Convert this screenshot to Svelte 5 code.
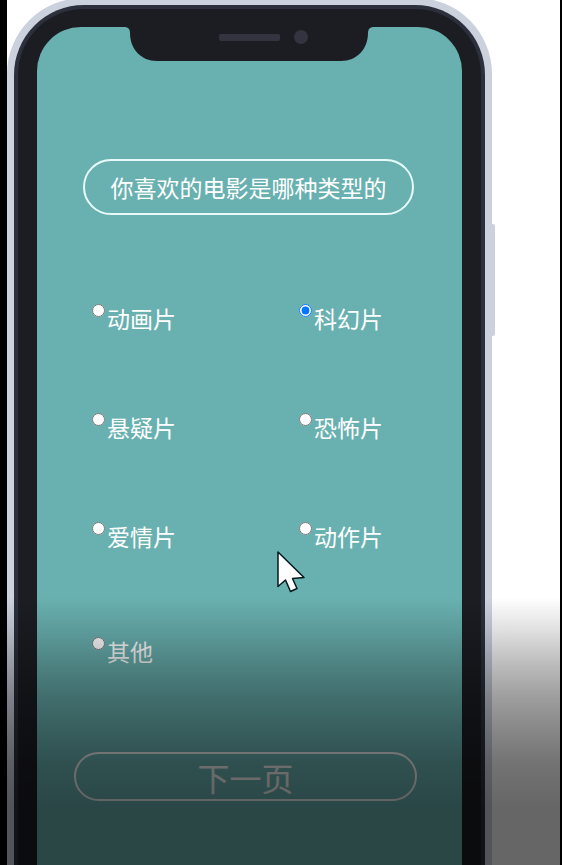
<script>
  const genres = ['动画片', '科幻片', '悬疑片', '恐怖片', '爱情片', '动作片', '其他'];
  let selected = $state('科幻片');
</script>

<div class="page">
  <main class="phone">
    <div class="rim">
      <div class="bezel">
        <form class="screen" onsubmit={(e) => e.preventDefault()}>
          <svg class="notch" width="250" height="35" viewBox="0 0 250 35" aria-hidden="true">
            <path d="M0 0H250V1C246 1 244 3 244 7C244 23 233 35 217 35H33C17 35 6 23 6 7C6 3 4 1 0 1Z" fill="#1c1d23" />
            <rect x="95" y="8" width="61" height="7" rx="2" fill="#33343f" />
            <circle cx="177" cy="11" r="7" fill="#33343f" />
          </svg>

          <h1 class="title" id="question">你喜欢的电影是哪种类型的</h1>

          <div class="options" role="radiogroup" aria-labelledby="question">
            {#each genres as genre}
              <label class="option" class:last={genre === '其他'}>
                <input type="radio" name="genre" value={genre} bind:group={selected} />
                <span>{genre}</span>
              </label>
            {/each}
          </div>

          <button class="next" type="submit">下一页</button>
        </form>
      </div>
    </div>
  </main>

  <div class="shade"></div>

  <svg class="cursor" width="30" height="44" viewBox="0 0 30 44" aria-hidden="true">
    <path d="M2 2V36.5L9.5 30L14.5 41.5L21 38.5L16.5 28.5L28 27.5Z" fill="#fff" stroke="#06181c" stroke-width="1.5" stroke-linejoin="round" />
  </svg>
</div>

<style>
  :global(body) {
    margin: 0;
    background: #fff;
  }

  .page {
    position: relative;
    display: flex;
    box-sizing: border-box;
    min-height: 100vh;
    overflow: hidden;
    border: solid #000;
    border-width: 0 2px 0 7px;
    background: #fff;
    font-family: 'Noto Sans CJK SC', 'Noto Sans', sans-serif;
    color: #fff;
  }

  .phone {
    position: relative;
    display: flex;
    flex: 1;
    box-sizing: border-box;
    margin: -2px 68px 0 0;
    padding: 7px 7px 0;
    border-radius: 76px 76px 0 0;
    background: #ccd1de;
  }

  .phone::after {
    content: '';
    position: absolute;
    top: 226px;
    left: 100%;
    width: 3px;
    height: 112px;
    border-radius: 0 2px 2px 0;
    background: #ccd1de;
  }

  .rim {
    display: flex;
    flex: 1;
    padding: 4px 4px 0;
    border-radius: 70px 70px 0 0;
    background: #2c303c;
  }

  .bezel {
    display: flex;
    flex: 1;
    padding: 18px 19px 0;
    border-radius: 66px 66px 0 0;
    background: #1c1d23;
  }

  .screen {
    position: relative;
    display: flex;
    flex: 1;
    flex-direction: column;
    padding: 132px 0 64px;
    border-radius: 44px 44px 0 0;
    background: #69b1b0;
  }

  .notch {
    position: absolute;
    top: -1px;
    left: 50%;
    margin-left: -126px;
  }

  .title {
    box-sizing: border-box;
    margin: 0 48px 0 46px;
    padding: 9px 0;
    border: 2px solid #e6fbfa;
    border-radius: 28px;
    font-size: 23px;
    font-weight: 400;
    line-height: 34px;
    text-align: center;
    white-space: nowrap;
  }

  .options {
    display: grid;
    grid-template-columns: auto auto;
    justify-content: space-between;
    row-gap: 75px;
    margin: 86px 79px 84px 55px;
  }

  .option {
    display: flex;
    align-items: flex-start;
    gap: 2px;
    font-size: 23px;
    line-height: 34px;
    white-space: nowrap;
  }

  .option input {
    width: 13px;
    height: 13px;
    margin: 3px 0 0;
  }

  .last {
    margin-top: 6px;
  }

  .next {
    box-sizing: border-box;
    height: 49px;
    margin: 0 45px 0 37px;
    padding: 2px 0 0;
    border: 2px solid #f2f2f2;
    border-radius: 25px;
    background: transparent;
    color: #f2f2f2;
    font-family: inherit;
    font-size: 32px;
    line-height: 43px;
  }

  .shade {
    position: absolute;
    right: 0;
    bottom: 0;
    left: 0;
    height: 268px;
    background: linear-gradient(
      rgba(0, 0, 0, 0) 0,
      rgba(0, 0, 0, 0.12) 33px,
      rgba(0, 0, 0, 0.26) 66px,
      rgba(0, 0, 0, 0.38) 100px,
      rgba(0, 0, 0, 0.47) 133px,
      rgba(0, 0, 0, 0.55) 166px,
      rgba(0, 0, 0, 0.6) 210px
    );
    pointer-events: none;
  }

  .cursor {
    position: absolute;
    top: 550px;
    left: 269px;
    pointer-events: none;
  }
</style>
